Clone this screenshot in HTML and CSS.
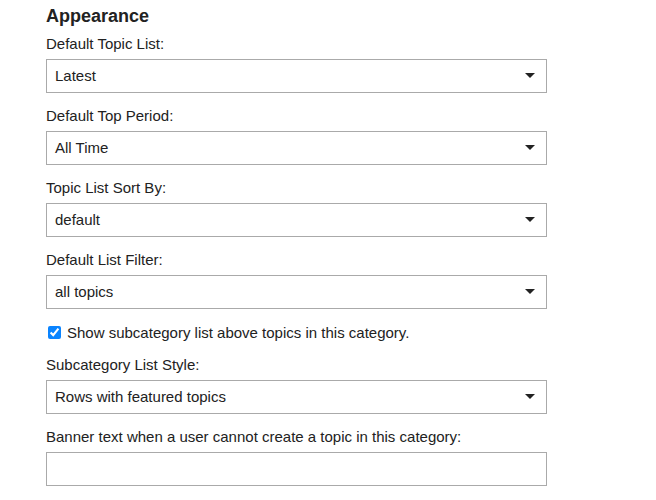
FILE: index.html
```html
<!DOCTYPE html>
<html lang="en">
<head>
    <meta charset="UTF-8">
    <title>Category Settings</title>
    <link rel="stylesheet" href="styles.css">
</head>
<body>

<section class="settings">
    <h3 class="section-title">Appearance</h3>

    <div class="field">
        <label class="field-label">Default Topic List:</label>
        <div class="select-box">
            <span>Latest</span>
            <span class="caret"></span>
        </div>
    </div>

    <div class="field">
        <label class="field-label">Default Top Period:</label>
        <div class="select-box">
            <span>All Time</span>
            <span class="caret"></span>
        </div>
    </div>

    <div class="field">
        <label class="field-label">Topic List Sort By:</label>
        <div class="select-box">
            <span>default</span>
            <span class="caret"></span>
        </div>
    </div>

    <div class="field">
        <label class="field-label">Default List Filter:</label>
        <div class="select-box">
            <span>all topics</span>
            <span class="caret"></span>
        </div>
    </div>

    <label class="checkbox-row">
        <input type="checkbox" checked>
        Show subcategory list above topics in this category.
    </label>

    <div class="field">
        <label class="field-label">Subcategory List Style:</label>
        <div class="select-box">
            <span>Rows with featured topics</span>
            <span class="caret"></span>
        </div>
    </div>

    <div class="field">
        <label class="field-label">Banner text when a user cannot create a topic in this category:</label>
        <input type="text" class="text-input">
    </div>
</section>

</body>
</html>
```

FILE: styles.css
```css
body {
    font-family: "Liberation Sans", Arial, sans-serif;
    font-size: 15px;
    color: #222;
    background-color: #fff;
    margin: 0;
    padding: 0;
}

.settings {
    width: 501px;
    padding: 5px 0 0 46px;
}

.section-title {
    font-size: 18px;
    font-weight: bold;
    line-height: 22px;
    margin: 0 0 8px 0;
}

.field {
    margin-bottom: 14px;
}

.field-label {
    display: block;
    line-height: 18px;
    margin-bottom: 6px;
}

.select-box {
    height: 34px;
    box-sizing: border-box;
    border: 1px solid #aaa;
    display: flex;
    align-items: center;
    justify-content: space-between;
    padding: 0 11px 2px 8px;
}

.caret {
    width: 0;
    height: 0;
    border-left: 5px solid transparent;
    border-right: 5px solid transparent;
    border-top: 5px solid #222;
}

.checkbox-row {
    display: flex;
    align-items: center;
    gap: 6px;
    line-height: 19px;
    margin: 0 0 14px 0;
}

.checkbox-row input {
    width: 13px;
    height: 13px;
    margin: 0 0 0 2px;
    accent-color: #0a84ff;
}

.text-input {
    display: block;
    width: 100%;
    height: 34px;
    box-sizing: border-box;
    border: 1px solid #aaa;
    margin: 0;
    font: inherit;
}
```
